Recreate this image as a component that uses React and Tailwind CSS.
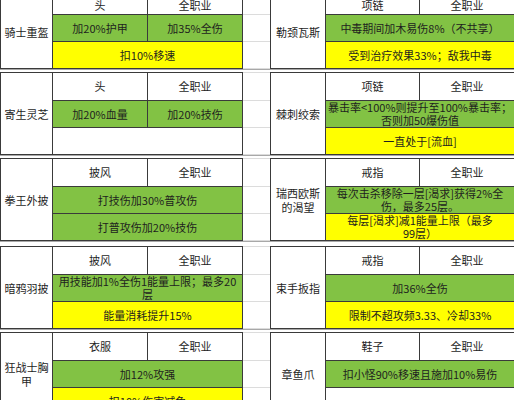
const GREEN = 'bg-[#82c244]';
const YELLOW = 'bg-[#ffff00]';

const left = [
  {
    name: '骑士重盔',
    slot: '头',
    rows: [
      { bg: GREEN, cells: ['加20%护甲', '加35%全伤'] },
      { bg: YELLOW, text: '扣10%移速' },
    ],
  },
  {
    name: '寄生灵芝',
    slot: '头',
    rows: [
      { bg: GREEN, cells: ['加20%血量', '加20%技伤'] },
      { bg: 'bg-white', text: '' },
    ],
  },
  {
    name: '拳王外披',
    slot: '披风',
    rows: [
      { bg: GREEN, text: '打技伤加30%普攻伤' },
      { bg: GREEN, text: '打普攻伤加20%技伤' },
    ],
  },
  {
    name: '暗鸦羽披',
    slot: '披风',
    rows: [
      { bg: GREEN, text: ['用技能加1%全伤1能量上限；最多20', '层'] },
      { bg: YELLOW, text: '能量消耗提升15%' },
    ],
  },
  {
    name: '狂战士胸甲',
    slot: '衣服',
    rows: [
      { bg: GREEN, text: '加12%攻强' },
      { bg: YELLOW, text: '扣10%伤害减免' },
    ],
  },
];

const right = [
  {
    name: '勒颈瓦斯',
    slot: '项链',
    rows: [
      { bg: GREEN, text: '中毒期间加木易伤8%（不共享）' },
      { bg: YELLOW, text: '受到治疗效果33%；敌我中毒' },
    ],
  },
  {
    name: '棘刺绞索',
    slot: '项链',
    rows: [
      { bg: GREEN, text: ['暴击率<100%则提升至100%暴击率；', '否则加50爆伤值'] },
      { bg: YELLOW, text: '一直处于[流血]' },
    ],
  },
  {
    name: '瑞西欧斯的渴望',
    slot: '戒指',
    rows: [
      { bg: GREEN, text: ['每次击杀移除一层[渴求]获得2%全', '伤，最多25层。'] },
      { bg: YELLOW, text: ['每层[渴求]减1能量上限（最多', '99层）'] },
    ],
  },
  {
    name: '束手扳指',
    slot: '戒指',
    rows: [
      { bg: GREEN, text: '加36%全伤' },
      { bg: YELLOW, text: '限制不超攻频3.33、冷却33%' },
    ],
  },
  {
    name: '章鱼爪',
    slot: '鞋子',
    rows: [
      { bg: GREEN, text: '扣小怪90%移速且施加10%易伤' },
      { bg: 'bg-white', text: '' },
    ],
  },
];

function Text({ value }) {
  if (Array.isArray(value)) {
    return (
      <span>
        {value[0]}
        <br />
        {value[1]}
      </span>
    );
  }
  return <span>{value}</span>;
}

function Card({ item, cols, rowsTpl }) {
  return (
    <div className={`grid ${cols} ${rowsTpl} gap-px p-px bg-[#3a3a3a] shrink-0`}>
      <div className="row-span-3 bg-white flex items-center justify-center text-center px-[3px] leading-[14px]">
        {item.name}
      </div>
      <div className="bg-white flex items-center justify-center">{item.slot}</div>
      <div className="bg-white flex items-center justify-center">全职业</div>
      {item.rows.map((r, i) =>
        r.cells ? (
          [
            <div key={`${i}a`} className={`${r.bg} flex items-center justify-center`}>{r.cells[0]}</div>,
            <div key={`${i}b`} className={`${r.bg} flex items-center justify-center`}>{r.cells[1]}</div>,
          ]
        ) : (
          <div key={i} className={`${r.bg} col-span-2 flex items-center justify-center text-center leading-[13px] whitespace-nowrap`}>
            <Text value={r.text} />
          </div>
        )
      )}
    </div>
  );
}

function Spacer({ rowsTpl }) {
  return (
    <div className={`grid ${rowsTpl} gap-px py-px bg-[#dcdcdc] w-[27px] shrink-0`}>
      <div className="bg-white" />
      <div className="bg-white" />
      <div className="bg-white" />
    </div>
  );
}

export default function App() {
  const gaps = ['h-[3px]', 'h-[3px]', 'h-[5px]', 'h-[3px]'];
  return (
    <div
      className="w-[514px] h-[400px] overflow-hidden bg-white text-[11px] text-[#1e1e1e]"
      style={{ fontFamily: '"Noto Sans CJK SC", "Noto Sans", sans-serif' }}
    >
      <div className="-mt-[5px] flex flex-col">
        {left.map((l, i) => {
          const rowsTpl = i === 0 ? 'grid-rows-[18px_26px_26px]' : 'grid-rows-[27px_26px_26px]';
          return (
            <div key={i} className="flex flex-col">
              <div className="flex">
                <Card item={l} cols="grid-cols-[51px_94px_94px]" rowsTpl={rowsTpl} />
                <Spacer rowsTpl={rowsTpl} />
                <Card item={right[i]} cols="grid-cols-[54px_93px_94px]" rowsTpl={rowsTpl} />
              </div>
              {i < gaps.length && <div className={`${gaps[i]} border-t border-[#a8a8a8]`} />}
            </div>
          );
        })}
      </div>
    </div>
  );
}
